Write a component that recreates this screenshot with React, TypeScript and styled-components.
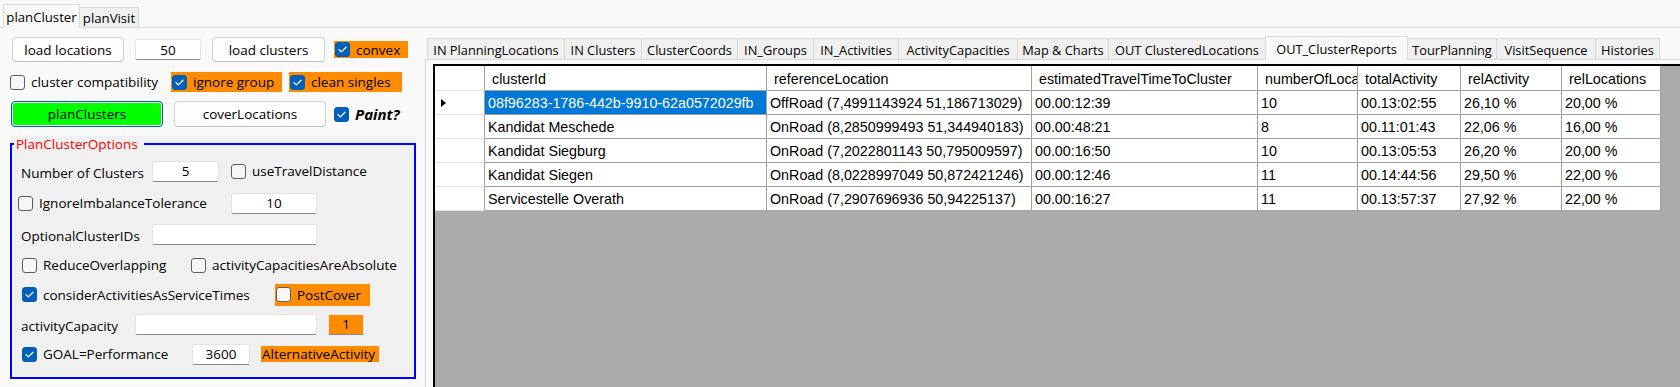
import React from "react";
import styled, { createGlobalStyle } from "styled-components";

const UI = `"Open Sans", "Noto Sans", "DejaVu Sans", sans-serif`;
const GRIDF = `"Liberation Sans", Arial, sans-serif`;
const FS = 13.5;

const GlobalStyle = createGlobalStyle`
  * { box-sizing: border-box; }
  html, body { margin: 0; padding: 0; }
  body { background: #f9f9f9; font-family: ${UI}; color: #000; overflow: hidden; }
`;

const Window = styled.div`
  width: 1680px;
  height: 387px;
  overflow: hidden;
  display: flex;
  flex-direction: column;
  background: #f9f9f9;
`;

const OuterStrip = styled.div`
  height: 28px;
  flex-shrink: 0;
  display: flex;
  align-items: flex-end;
  padding-left: 3px;
  border-bottom: 1px solid #dadada;
`;

const OuterTab = styled.div<{ $w: number; $active?: boolean }>`
  width: ${(p) => p.$w}px;
  height: ${(p) => (p.$active ? 24 : 20)}px;
  margin-bottom: ${(p) => (p.$active ? -1 : 0)}px;
  margin-left: ${(p) => (p.$active ? 0 : -1)}px;
  border: 1px solid #d9d9d9;
  border-bottom: none;
  background: ${(p) => (p.$active ? "#f9f9f9" : "#f0f0f0")};
  font-size: 13.2px;
  display: flex;
  align-items: center;
  justify-content: center;
  white-space: nowrap;
`;

const Main = styled.div`
  flex: 1;
  display: flex;
  min-height: 0;
`;

const LeftPanel = styled.div`
  width: 425px;
  flex-shrink: 0;
  display: flex;
  flex-direction: column;
  padding-top: 9px;
`;

const Row = styled.div<{ $h: number; $mt?: number }>`
  display: flex;
  align-items: center;
  height: ${(p) => p.$h}px;
  margin-top: ${(p) => p.$mt ?? 0}px;
  flex-shrink: 0;
`;

const PushButton = styled.div<{ $w: number; $h: number; $ml?: number }>`
  width: ${(p) => p.$w}px;
  height: ${(p) => p.$h}px;
  margin-left: ${(p) => p.$ml ?? 0}px;
  flex-shrink: 0;
  background: #fdfdfd;
  border: 1px solid #d0d0d0;
  border-bottom-color: #c2c2c2;
  border-radius: 4px;
  font-size: ${FS}px;
  display: flex;
  align-items: center;
  justify-content: center;
  white-space: nowrap;
`;

const GreenButton = styled(PushButton)`
  background: #00ff00;
  border: 1px solid #005fb8;
  box-shadow: inset 0 0 0 1px #ffffff;
`;

const TextBox = styled.div<{ $w: number; $h: number; $ml?: number; $orange?: boolean }>`
  width: ${(p) => p.$w}px;
  height: ${(p) => p.$h}px;
  margin-left: ${(p) => p.$ml ?? 0}px;
  flex-shrink: 0;
  background: ${(p) => (p.$orange ? "#ff8c00" : "#ffffff")};
  border: 1px solid #e3e3e3;
  border-bottom: 1px solid #8a8a8a;
  border-radius: 2px;
  font-size: ${FS}px;
  display: flex;
  align-items: center;
  justify-content: center;
  white-space: nowrap;
`;

const Check = styled.div<{ $w?: number; $h?: number; $ml?: number; $orange?: boolean }>`
  display: flex;
  align-items: center;
  gap: 6px;
  flex-shrink: 0;
  margin-left: ${(p) => p.$ml ?? 0}px;
  width: ${(p) => (p.$w ? `${p.$w}px` : "auto")};
  height: ${(p) => (p.$h ? `${p.$h}px` : "auto")};
  padding-left: ${(p) => (p.$orange ? 1 : 0)}px;
  background: ${(p) => (p.$orange ? "#ff8c00" : "transparent")};
  font-size: ${FS}px;
  white-space: nowrap;
`;

const Box = styled.span<{ $checked?: boolean }>`
  width: 15px;
  height: 15px;
  flex-shrink: 0;
  border-radius: 3px;
  background: ${(p) => (p.$checked ? "#005fb8" : "#f7f7f7")};
  border: 1px solid ${(p) => (p.$checked ? "#005fb8" : "#5e5e5e")};
  display: flex;
  align-items: center;
  justify-content: center;
`;

const BoldItalic = styled.span`
  font-weight: 700;
  font-style: italic;
  font-size: 15px;
`;

const Label = styled.div<{ $w: number; $ml?: number }>`
  width: ${(p) => p.$w}px;
  margin-left: ${(p) => p.$ml ?? 0}px;
  flex-shrink: 0;
  font-size: ${FS}px;
  white-space: nowrap;
  padding-top: 3px;
`;

const OrangeLabel = styled.div<{ $w: number; $h: number; $ml?: number }>`
  width: ${(p) => p.$w}px;
  height: ${(p) => p.$h}px;
  margin-left: ${(p) => p.$ml ?? 0}px;
  flex-shrink: 0;
  background: #ff8c00;
  font-size: ${FS}px;
  white-space: nowrap;
  display: flex;
  align-items: center;
  padding-left: 1px;
  overflow: hidden;
`;

const GroupWrap = styled.div`
  margin: 9px 0 0 10px;
  width: 406px;
  height: 243px;
  background: #f0f0f0;
  flex-shrink: 0;
`;

const GroupFrame = styled.fieldset`
  margin: 0;
  padding: 0;
  min-width: 0;
  height: 100%;
  border: 2px solid #0000ff;
`;

const GroupTitle = styled.legend`
  margin-left: 2px;
  padding: 0 6px 0 2px;
  color: #ff0000;
  font-size: ${FS}px;
  line-height: 16px;
`;

const GroupBody = styled.div`
  display: flex;
  flex-direction: column;
  padding-top: 3px;
`;

const RightPanel = styled.div`
  flex: 1;
  display: flex;
  flex-direction: column;
  min-width: 0;
`;

const InnerStrip = styled.div`
  height: 31px;
  flex-shrink: 0;
  padding: 8px 0 0 2px;
  display: flex;
  align-items: flex-end;
`;

const InnerTab = styled.div<{ $w: number; $active?: boolean; $first?: boolean }>`
  width: ${(p) => p.$w + 1}px;
  height: ${(p) => (p.$active ? 24 : 21)}px;
  margin-bottom: ${(p) => (p.$active ? -1 : 0)}px;
  margin-left: ${(p) => (p.$first ? 0 : -1)}px;
  position: relative;
  z-index: ${(p) => (p.$active ? 2 : 1)};
  border: 1px solid #d9d9d9;
  border-bottom: none;
  background: ${(p) => (p.$active ? "#f9f9f9" : "#f0f0f0")};
  font-size: 12.8px;
  display: flex;
  align-items: center;
  justify-content: center;
  padding-top: ${(p) => (p.$active ? 0 : 1)}px;
  white-space: nowrap;
  overflow: hidden;
`;

const TabPage = styled.div`
  flex: 1;
  min-height: 0;
  display: flex;
  border-top: 1px solid #d9d9d9;
  border-left: 1px solid #d9d9d9;
  background: #f9f9f9;
  padding: 4px 0 0 7px;
`;

const GridView = styled.div`
  flex: 1;
  background: #ababab;
  border-top: 2px solid #000;
  border-left: 2px solid #000;
  overflow: hidden;
`;

const Table = styled.div`
  display: grid;
  grid-template-columns: 50px 282px 265px 226px 100px 103px 101px 99px;
  grid-template-rows: 25px;
  grid-auto-rows: 24px;
  width: max-content;
  font-family: ${GRIDF};
  font-size: 14.3px;
`;

const Cell = styled.div<{ $selected?: boolean }>`
  background: ${(p) => (p.$selected ? "#0078d7" : "#ffffff")};
  color: ${(p) => (p.$selected ? "#ffffff" : "#000000")};
  border-right: 1px solid #a0a0a0;
  border-bottom: 1px solid #a0a0a0;
  padding-left: 3px;
  display: flex;
  align-items: center;
  white-space: nowrap;
  overflow: hidden;
`;

const HeadCell = styled(Cell)`
  padding-left: 7px;
  padding-top: 1px;
`;

const RowHead = styled.div`
  background: #ffffff;
  border-right: 1px solid #a0a0a0;
  border-bottom: 1px solid #e3e3e3;
  display: flex;
  align-items: center;
  padding-left: 6px;
`;

const Arrow = styled.span`
  width: 0;
  height: 0;
  border-top: 4px solid transparent;
  border-bottom: 4px solid transparent;
  border-left: 5px solid #000;
`;

const Tick = () => (
  <svg width="11" height="11" viewBox="0 0 11 11">
    <path d="M2 5.6 L4.3 7.9 L9 3.2" fill="none" stroke="#ffffff" strokeWidth="1.3" strokeLinecap="round" strokeLinejoin="round" />
  </svg>
);

type CbProps = {
  checked?: boolean;
  orange?: boolean;
  w?: number;
  h?: number;
  ml?: number;
  children: React.ReactNode;
};

const CheckBox = ({ checked, orange, w, h, ml, children }: CbProps) => (
  <Check $orange={orange} $w={w} $h={h} $ml={ml}>
    <Box $checked={checked}>{checked && <Tick />}</Box>
    <span>{children}</span>
  </Check>
);

const innerTabs = [
  { t: "IN PlanningLocations", w: 137 },
  { t: "IN Clusters", w: 77 },
  { t: "ClusterCoords", w: 96 },
  { t: "IN_Groups", w: 76 },
  { t: "IN_Activities", w: 85 },
  { t: "ActivityCapacities", w: 119 },
  { t: "Map & Charts", w: 91 },
  { t: "OUT ClusteredLocations", w: 157 },
  { t: "OUT_ClusterReports", w: 142, active: true },
  { t: "TourPlanning", w: 89 },
  { t: "VisitSequence", w: 99 },
  { t: "Histories", w: 64 },
];

const headers = [
  "clusterId",
  "referenceLocation",
  "estimatedTravelTimeToCluster",
  "numberOfLocations",
  "totalActivity",
  "relActivity",
  "relLocations",
];

const rows = [
  ["08f96283-1786-442b-9910-62a0572029fb", "OffRoad (7,4991143924 51,186713029)", "00.00:12:39", "10", "00.13:02:55", "26,10 %", "20,00 %"],
  ["Kandidat Meschede", "OnRoad (8,2850999493 51,344940183)", "00.00:48:21", "8", "00.11:01:43", "22,06 %", "16,00 %"],
  ["Kandidat Siegburg", "OnRoad (7,2022801143 50,795009597)", "00.00:16:50", "10", "00.13:05:53", "26,20 %", "20,00 %"],
  ["Kandidat Siegen", "OnRoad (8,0228997049 50,872421246)", "00.00:12:46", "11", "00.14:44:56", "29,50 %", "22,00 %"],
  ["Servicestelle Overath", "OnRoad (7,2907696936 50,94225137)", "00.00:16:27", "11", "00.13:57:37", "27,92 %", "22,00 %"],
];

export default function App() {
  return (
    <>
      <GlobalStyle />
      <Window>
        <OuterStrip>
          <OuterTab $w={77} $active>planCluster</OuterTab>
          <OuterTab $w={60}>planVisit</OuterTab>
        </OuterStrip>
        <Main>
          <LeftPanel>
            <Row $h={25}>
              <PushButton $w={112} $h={25} $ml={12}>load locations</PushButton>
              <TextBox $w={66} $h={21} $ml={11}>50</TextBox>
              <PushButton $w={113} $h={25} $ml={11}>load clusters</PushButton>
              <CheckBox checked orange w={74} h={17} ml={9}>convex</CheckBox>
            </Row>
            <Row $h={20} $mt={10}>
              <CheckBox w={161} ml={10}>cluster compatibility</CheckBox>
              <CheckBox checked orange w={111} h={20}>ignore group</CheckBox>
              <CheckBox checked orange w={113} h={20} ml={7}>clean singles</CheckBox>
            </Row>
            <Row $h={26} $mt={9}>
              <GreenButton $w={152} $h={26} $ml={11}>planClusters</GreenButton>
              <PushButton $w={152} $h={26} $ml={11}>coverLocations</PushButton>
              <CheckBox checked ml={8}>
                <BoldItalic>Paint?</BoldItalic>
              </CheckBox>
            </Row>
            <GroupWrap>
              <GroupFrame>
                <GroupTitle>PlanClusterOptions</GroupTitle>
                <GroupBody>
                  <Row $h={32}>
                    <Label $w={131} $ml={9}>Number of Clusters</Label>
                    <TextBox $w={67} $h={21}>5</TextBox>
                    <CheckBox ml={12}>useTravelDistance</CheckBox>
                  </Row>
                  <Row $h={32}>
                    <CheckBox w={213} ml={6}>IgnoreImbalanceTolerance</CheckBox>
                    <TextBox $w={86} $h={21}>10</TextBox>
                  </Row>
                  <Row $h={31}>
                    <Label $w={131} $ml={9}>OptionalClusterIDs</Label>
                    <TextBox $w={165} $h={21} />
                  </Row>
                  <Row $h={30}>
                    <CheckBox w={169} ml={10}>ReduceOverlapping</CheckBox>
                    <CheckBox>activityCapacitiesAreAbsolute</CheckBox>
                  </Row>
                  <Row $h={29}>
                    <CheckBox checked w={253} ml={10}>considerActivitiesAsServiceTimes</CheckBox>
                    <CheckBox orange w={95} h={22}>PostCover</CheckBox>
                  </Row>
                  <Row $h={30}>
                    <Label $w={114} $ml={9}>activityCapacity</Label>
                    <TextBox $w={182} $h={21} />
                    <TextBox $w={36} $h={21} $ml={11} $orange>1</TextBox>
                  </Row>
                  <Row $h={30}>
                    <CheckBox checked w={170} ml={10}>GOAL=Performance</CheckBox>
                    <TextBox $w={58} $h={21}>3600</TextBox>
                    <OrangeLabel $w={118} $h={16} $ml={11}>AlternativeActivity</OrangeLabel>
                  </Row>
                </GroupBody>
              </GroupFrame>
            </GroupWrap>
          </LeftPanel>
          <RightPanel>
            <InnerStrip>
              {innerTabs.map((t, i) => (
                <InnerTab key={t.t} $w={t.w} $active={t.active} $first={i === 0}>
                  {t.t}
                </InnerTab>
              ))}
            </InnerStrip>
            <TabPage>
              <GridView>
                <Table>
                  <RowHead />
                  {headers.map((h) => (
                    <HeadCell key={h}>{h}</HeadCell>
                  ))}
                  {rows.map((r, ri) => (
                    <React.Fragment key={ri}>
                      <RowHead>{ri === 0 && <Arrow />}</RowHead>
                      {r.map((c, ci) => (
                        <Cell key={ci} $selected={ri === 0 && ci === 0}>
                          {c}
                        </Cell>
                      ))}
                    </React.Fragment>
                  ))}
                </Table>
              </GridView>
            </TabPage>
          </RightPanel>
        </Main>
      </Window>
    </>
  );
}
